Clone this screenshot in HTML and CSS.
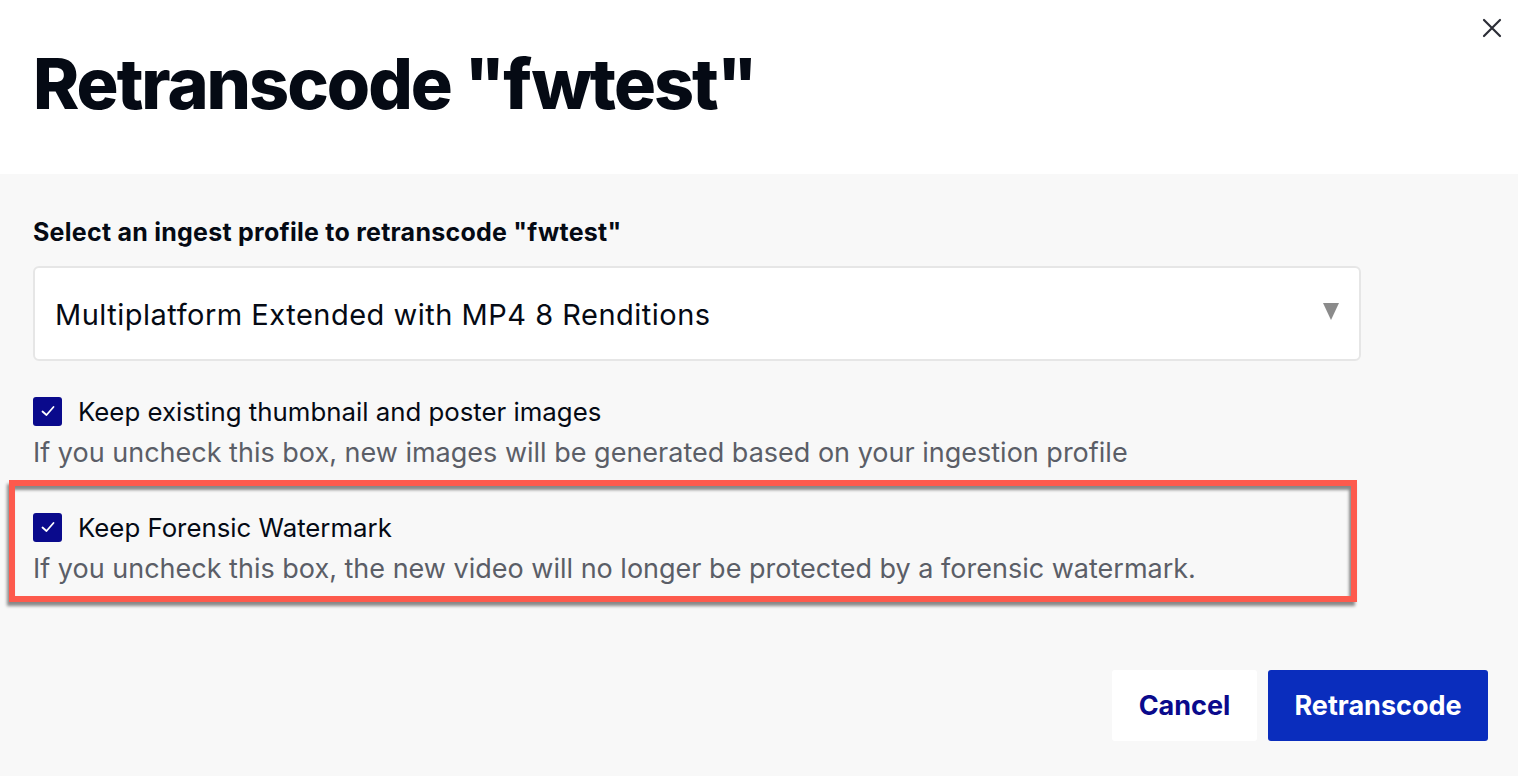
FILE: index.html
```html
<!DOCTYPE html>
<html>
<head>
<meta charset="utf-8">
<link rel="stylesheet" href="styles.css">
</head>
<body>
<div class="modal">
  <header class="head">
    <h1 class="title">Retranscode "fwtest"</h1>
    <button class="close" aria-label="Close">
      <svg width="20" height="20" viewBox="0 0 20 20"><path d="M2 2 L18 18 M18 2 L2 18" stroke="#2b2d36" stroke-width="2.2" stroke-linecap="round"/></svg>
    </button>
  </header>
  <main class="body">
    <label class="field-label">Select an ingest profile to retranscode "fwtest"</label>
    <div class="select">
      <span class="select-text">Multiplatform Extended with MP4 8 Renditions</span>
      <span class="arrow"></span>
    </div>
    <div class="option">
      <div class="check-row">
        <span class="checkbox"><svg width="18" height="18" viewBox="0 0 18 18"><path d="M3.5 9.5 L7.5 13 L14.5 5" fill="none" stroke="#fff" stroke-width="1.8" stroke-linecap="round" stroke-linejoin="round"/></svg></span>
        <span class="check-label">Keep existing thumbnail and poster images</span>
      </div>
      <p class="help">If you uncheck this box, new images will be generated based on your ingestion profile</p>
    </div>
    <div class="option highlight">
      <div class="check-row">
        <span class="checkbox"><svg width="18" height="18" viewBox="0 0 18 18"><path d="M3.5 9.5 L7.5 13 L14.5 5" fill="none" stroke="#fff" stroke-width="1.8" stroke-linecap="round" stroke-linejoin="round"/></svg></span>
        <span class="check-label">Keep Forensic Watermark</span>
      </div>
      <p class="help">If you uncheck this box, the new video will no longer be protected by a forensic watermark.</p>
    </div>
    <div class="actions">
      <button class="btn cancel">Cancel</button>
      <button class="btn primary">Retranscode</button>
    </div>
  </main>
</div>
</body>
</html>
```

FILE: styles.css
```css
* { box-sizing: border-box; }
html, body { margin: 0; padding: 0; }
body {
  font-family: Inter, "Noto Sans", sans-serif;
  background: #f8f8f8;
  color: #050a14;
  width: 1518px;
  height: 776px;
  overflow: hidden;
}
.modal { display: flex; flex-direction: column; height: 776px; }
.head {
  background: #fff;
  height: 174px;
  display: flex;
  justify-content: space-between;
  align-items: flex-start;
  padding: 0 16px 0 33px;
}
.title {
  margin: 44px 0 0 0;
  font-size: 70px;
  font-weight: 800;
  letter-spacing: -2px;
  line-height: 80px;
  color: #050a14;
}
.close {
  margin-top: 18px;
  background: none;
  border: 0;
  padding: 0;
  width: 20px;
  height: 20px;
  cursor: pointer;
}
.body {
  flex: 1;
  background: #f8f8f8;
  padding: 42px 30px 0 33px;
  display: flex;
  flex-direction: column;
}
.field-label {
  font-size: 25px;
  font-weight: 700;
  letter-spacing: 0.25px;
  line-height: 32px;
  color: #050a14;
}
.select {
  margin-top: 18px;
  width: 1328px;
  height: 95px;
  background: #fff;
  border: 2px solid #e6e6e6;
  border-radius: 6px;
  display: flex;
  align-items: center;
  justify-content: space-between;
  padding: 2px 20px 0 20px;
}
.select-text { font-size: 29px; letter-spacing: 0.5px; color: #050a14; }
.arrow {
  width: 0; height: 0;
  border-left: 8px solid transparent;
  border-right: 8px solid transparent;
  border-top: 17px solid #8b8b8b;
  margin-top: -6px;
}
.option { margin-top: 34px; }
.check-row { display: flex; align-items: center; gap: 16px; height: 32px; }
.checkbox {
  width: 29px; height: 29px;
  background: #0a0a8c;
  border-radius: 3px;
  display: flex; align-items: center; justify-content: center;
}
.check-label { font-size: 25.8px; color: #050a14; }
.help {
  margin: 10px 0 0 0;
  font-size: 27px;
  line-height: 32px;
  color: #5b5e67;
}
.highlight {
  margin: 11px 0 0 -24px;
  width: 1348px;
  height: 122px;
  border: 6px solid #fd5a4d;
  padding: 25px 0 0 18px;
  box-shadow: -2px 4px 3px rgba(0,0,0,0.45), inset -2px 4px 3px rgba(0,0,0,0.45);
}
.actions {
  margin-top: 68px;
  display: flex;
  justify-content: flex-end;
  gap: 11px;
  width: 1455px;
}
.btn {
  height: 71px;
  border: 0;
  border-radius: 3px;
  font-family: inherit;
  font-size: 27px;
  font-weight: 700;
  cursor: pointer;
}
.cancel { background: #fff; color: #0a0a8c; width: 145px; }
.primary { background: #0a2dbd; color: #fff; width: 220px; }
```
